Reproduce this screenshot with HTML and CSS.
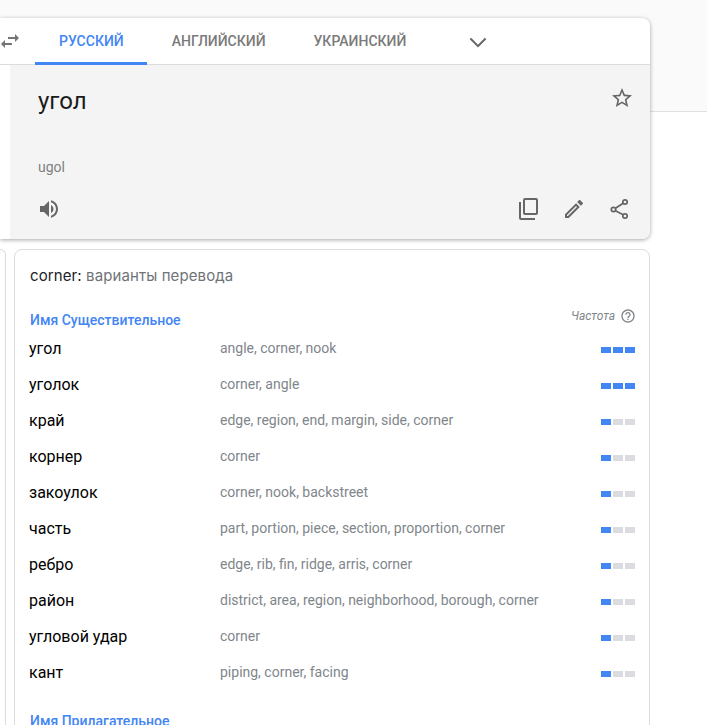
FILE: index.html
```html
<!DOCTYPE html>
<html lang="ru">
<head>
<meta charset="utf-8">
<title>Переводчик</title>
<link rel="stylesheet" href="styles.css">
</head>
<body>
<div class="page">
  <section class="panel">
    <div class="tabs">
      <svg class="swap" viewBox="0 0 24 24"><path d="M6.99 11L3 15l3.99 4v-3H14v-2H6.99v-3zM21 9l-3.99-4v3H10v2h7.01v3L21 9z"/></svg>
      <div class="tab active">Русский</div>
      <div class="tab second">Английский</div>
      <div class="tab">Украинский</div>
      <svg class="chev" viewBox="0 0 24 24"><path d="M5.5 9l6.5 6.5L18.500 9"/></svg>
    </div>
    <div class="source">
      <div class="source-top">
        <div class="word">угол</div>
        <svg class="star" viewBox="0 0 24 24"><path d="M22 9.24l-7.19-.62L12 2 9.19 8.63 2 9.24l5.46 4.73L5.820 21 12 17.27 18.18 21l-1.63-7.03L22 9.24zM12 15.4l-3.76 2.27 1-4.28-3.32-2.88 4.38-.38L12 6.1l1.71 4.04 4.38.38-3.32 2.88 1 4.28L12 15.4z"/></svg>
      </div>
      <div class="translit">ugol</div>
      <div class="actions">
        <svg class="ico" viewBox="0 0 24 24"><path d="M3 9v6h4l5 5V4L7 9H3zm13.5 3c0-1.77-1.02-3.29-2.5-4.03v8.05c1.48-.73 2.5-2.25 2.5-4.02zM14 3.23v2.06c2.89.86 5 3.54 5 6.71s-2.11 5.85-5 6.71v2.06c4.01-.91 7-4.49 7-8.77s-2.99-7.86-7-8.77z"/></svg>
        <div class="actions-right">
          <svg class="ico line" viewBox="0 0 24 24"><rect x="8" y="2" width="13" height="15" rx="1"/><path d="M4 5v16a1 1 0 0 0 1 1h14"/></svg>
          <svg class="ico" viewBox="0 0 24 24"><path d="M3 17.25V21h3.75L17.81 9.94l-3.75-3.75L3 17.25zM5.92 19H5v-.92l9.06-9.06.92.92L5.92 19zM20.71 7.04c.39-.39.39-1.02 0-1.41l-2.34-2.34c-.2-.2-.45-.29-.71-.29s-.51.1-.7.29l-1.83 1.83 3.75 3.75 1.83-1.83z"/></svg>
          <svg class="ico share" viewBox="0 0 24 24"><path d="M15.2 6.2L7.4 11.2M7.4 13.8L15.2 17.8"/><circle cx="17" cy="5" r="2.2"/><circle cx="5.5" cy="12.5" r="2.2"/><circle cx="17" cy="19" r="2.2"/></svg>
        </div>
      </div>
    </div>
  </section>

  <div class="lower">
    <div class="stub"></div>
    <section class="card">
      <h2 class="card-title"><span class="term">corner:</span> варианты перевода</h2>
      <div class="pos-head">
        <span class="pos">Имя Существительное</span>
        <span class="freq">Частота <svg class="help" viewBox="0 0 24 24"><path d="M11 18h2v-2h-2v2zm1-16C6.48 2 2 6.48 2 12s4.48 10 10 10 10-4.48 10-10S17.52 2 12 2zm0 18c-4.41 0-8-3.59-8-8s3.59-8 8-8 8 3.59 8 8-3.59 8-8 8zm0-14c-2.21 0-4 1.79-4 4h2c0-1.1.9-2 2-2s2 .9 2 2c0 2-3 1.75-3 5h2c0-2.25 3-2.5 3-5 0-2.21-1.79-4-4-4z"/></svg></span>
      </div>
      <div class="row"><span class="ru">угол</span><span class="en">angle, corner, nook</span><span class="bars"><i class="on"></i><i class="on"></i><i class="on"></i></span></div>
      <div class="row"><span class="ru">уголок</span><span class="en">corner, angle</span><span class="bars"><i class="on"></i><i class="on"></i><i class="on"></i></span></div>
      <div class="row"><span class="ru">край</span><span class="en">edge, region, end, margin, side, corner</span><span class="bars"><i class="on"></i><i></i><i></i></span></div>
      <div class="row"><span class="ru">корнер</span><span class="en">corner</span><span class="bars"><i class="on"></i><i></i><i></i></span></div>
      <div class="row"><span class="ru">закоулок</span><span class="en">corner, nook, backstreet</span><span class="bars"><i class="on"></i><i></i><i></i></span></div>
      <div class="row"><span class="ru">часть</span><span class="en">part, portion, piece, section, proportion, corner</span><span class="bars"><i class="on"></i><i></i><i></i></span></div>
      <div class="row"><span class="ru">ребро</span><span class="en">edge, rib, fin, ridge, arris, corner</span><span class="bars"><i class="on"></i><i></i><i></i></span></div>
      <div class="row"><span class="ru">район</span><span class="en">district, area, region, neighborhood, borough, corner</span><span class="bars"><i class="on"></i><i></i><i></i></span></div>
      <div class="row"><span class="ru">угловой удар</span><span class="en">corner</span><span class="bars"><i class="on"></i><i></i><i></i></span></div>
      <div class="row"><span class="ru">кант</span><span class="en">piping, corner, facing</span><span class="bars"><i class="on"></i><i></i><i></i></span></div>
      <div class="pos-next">Имя Прилагательное</div>
    </section>
  </div>
</div>
</body>
</html>
```

FILE: styles.css
```css
* { box-sizing: border-box; }
html, body { margin: 0; height: 100%; overflow: hidden; }
body {
  font-family: Roboto, "Liberation Sans", sans-serif;
  background: linear-gradient(#fafafa 111px, #e0e0e0 111px, #e0e0e0 112px, #fff 112px);
}
.page { padding-top: 18px; width: 650px; }

.panel {
  height: 221px;
  background: #fff;
  border-radius: 0 8px 8px 0;
  box-shadow: 0 1px 4px rgba(0, 0, 0, .35);
  display: flex;
  flex-direction: column;
  overflow: hidden;
}
.tabs {
  height: 47px;
  flex: none;
  display: flex;
  align-items: stretch;
  border-bottom: 1px solid #dcdcdc;
}
.swap { width: 24px; height: 24px; fill: #757575; margin: 11px 13px 0 -2px; flex: none; }
.tab {
  padding: 0 24px;
  height: 47px;
  line-height: 47px;
  font-size: 14px;
  font-weight: 500;
  text-transform: uppercase;
  color: #7a7a7a;
}
.tab.active { color: #4285f4; border-bottom: 3px solid #4285f4; padding-right: 23px; }
.tab.second { padding-left: 25px; }
.chev { width: 28px; height: 28px; fill: none; stroke: #666; stroke-width: 1.7; margin: 10px 0 0 34px; flex: none; }

.source {
  flex: 1;
  margin-left: 10px;
  background: #f4f4f4;
  padding: 0 16px 0 28px;
  display: flex;
  flex-direction: column;
}
.source-top { display: flex; justify-content: space-between; height: 73px; padding-top: 21px; }
.word { font-size: 24px; line-height: 30px; color: #1a1a1a; }
.star { width: 24px; height: 24px; fill: #666; }
.translit { font-size: 14px; line-height: 20px; color: #808080; margin-top: 19px; }
.actions { display: flex; justify-content: space-between; align-items: center; margin-top: 20px; margin-left: -1px; }
.actions-right { display: flex; gap: 22px; margin-right: 2px; }
.ico { width: 24px; height: 24px; fill: #666; display: block; }
.line { fill: none; stroke: #666; stroke-width: 2; }
.share { fill: none; stroke: #666; stroke-width: 1.7; }

.lower { display: flex; gap: 8px; margin-top: 10px; }
.stub {
  width: 6px;
  height: 560px;
  flex: none;
  border: 1px solid #dadce0;
  border-left: 0;
  border-radius: 0 8px 8px 0;
}
.card {
  flex: 1;
  height: 600px;
  border: 1px solid #dadce0;
  border-radius: 8px;
  padding: 0 14px 0 14px;
  background: #fff;
}
.card-title {
  margin: 0;
  padding: 16px 0 0 1px;
  font-family: Inter, sans-serif;
  font-size: 15px;
  letter-spacing: .1px;
  line-height: 20px;
  font-weight: 400;
  color: #6f7377;
}
.term { color: #202124; }
.pos-head { display: flex; justify-content: space-between; align-items: flex-start; margin-top: 22px; height: 22px; padding-left: 1px; }
.pos { font-size: 14px; font-weight: 500; line-height: 20px; color: #4285f4; margin-top: 2px; }
.freq { font-size: 12px; font-style: italic; color: #80868b; display: flex; align-items: center; gap: 5px; line-height: 16px; }
.help { width: 16px; height: 16px; fill: #80868b; margin-right: -1px; }
.row { display: flex; align-items: center; height: 36px; }
.ru { width: 191px; flex: none; font-size: 16px; color: #000; }
.en { flex: 1; font-size: 14px; color: #80868b; }
.bars { display: flex; gap: 2px; margin-top: 4px; }
.bars i { display: block; width: 10px; height: 6px; background: #dadce0; }
.bars i.on { background: #4285f4; }
.pos-next { font-size: 14px; font-weight: 500; line-height: 20px; color: #4285f4; margin-top: 21px; padding-left: 1px; }
```
